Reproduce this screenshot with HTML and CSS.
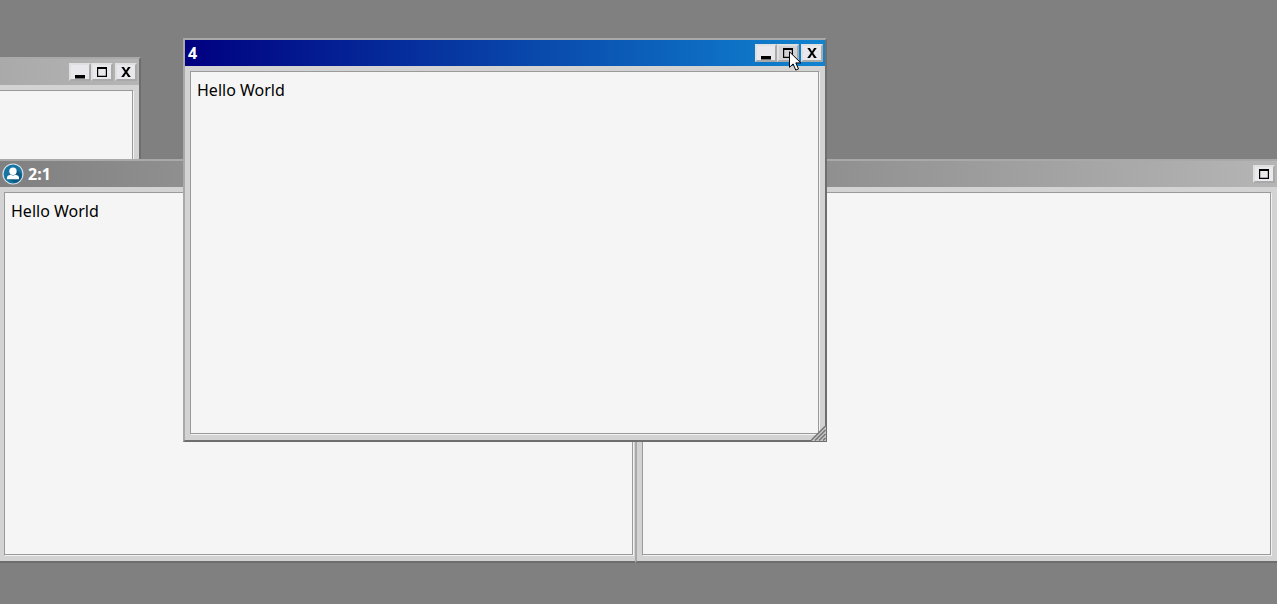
FILE: index.html
```html
<!DOCTYPE html>
<html lang="en">
<head>
<meta charset="utf-8">
<title>Desktop</title>
<link rel="stylesheet" href="styles.css">
</head>
<body>
<main class="desktop">
  <section class="window window-back">
    <header class="titlebar">
      <span class="title"></span>
      <button class="btn"><svg width="10" height="10"><path d="M0 8h10v3.5H0z" /></svg></button>
      <button class="btn"><svg width="10" height="10"><path fill-rule="evenodd" d="M0 0h10v10H0zM1.2 2v6.8h7.6V2z" /></svg></button>
      <button class="btn close"><svg width="10" height="10"><path d="M.3 0h2.6L5 3.6 7.1 0h2.6L6.2 5l3.6 5H7.1L5 6.4 2.9 10H.2l3.6-5z" /></svg></button>
    </header>
    <div class="content"></div>
  </section>

  <section class="window window-left">
    <header class="titlebar">
      <svg class="avatar" width="22" height="22" viewBox="0 0 22 22">
        <circle cx="11" cy="11" r="10" fill="#1774a3" stroke="#d6e1e8" stroke-width="1.2" />
        <path d="M14 6l6 6a9.3 9.3 0 0 1-7 8l-7-4z" fill="#0c5a84" />
        <circle cx="11" cy="8.2" r="3.7" fill="#fff" />
        <path d="M5 16.2v-1.4q0-2.4 3.6-3.1 2.4 1.5 4.8 0 3.6.7 3.6 3.1v1.4z" fill="#fff" />
      </svg>
      <span class="title">2:1</span>
    </header>
    <div class="content">Hello World</div>
  </section>

  <section class="window window-right">
    <header class="titlebar">
      <span class="title"></span>
      <button class="btn close"><svg width="10" height="10"><path fill-rule="evenodd" d="M0 0h10v10H0zM1.2 2v6.8h7.6V2z" /></svg></button>
    </header>
    <div class="content"></div>
  </section>

  <section class="window window-active">
    <header class="titlebar">
      <span class="title">4</span>
      <button class="btn"><svg width="10" height="10"><path d="M0 8h10v3.5H0z" /></svg></button>
      <button class="btn hover"><svg width="10" height="10"><path fill-rule="evenodd" d="M0 0h10v10H0zM1.2 2v6.8h7.6V2z" /></svg></button>
      <button class="btn close"><svg width="10" height="10"><path d="M.3 0h2.6L5 3.6 7.1 0h2.6L6.2 5l3.6 5H7.1L5 6.4 2.9 10H.2l3.6-5z" /></svg></button>
    </header>
    <div class="content">Hello World</div>
    <svg class="grip" width="15" height="15" viewBox="0 0 15 15">
      <path d="M0 15L15 0v15z" fill="#c4c4c4" />
      <path d="M0 14.5L14.5 0M4 14.5L14.5 4M8 14.5L14.5 8M12 14.5l2.5-2.5" stroke="#777" stroke-width="1.5" />
    </svg>
  </section>

  <svg class="cursor" width="13" height="20" viewBox="0 0 13 20">
    <path d="M.5.8v15.5l3.6-3.4 2.7 6.2 2.7-1.2-2.7-6h5z" fill="#fff" stroke="#000" />
  </svg>
</main>
</body>
</html>
```
FILE: styles.css
```css
body {
  margin: 0;
  font: 16px/22px "Noto Sans", sans-serif;
  color: #000;
}

.desktop {
  position: relative;
  width: 1277px;
  height: 604px;
  overflow: hidden;
  background: #808080;
}

/* Windows are freely placed on the desktop */
.window {
  position: absolute;
  box-sizing: border-box;
  display: flex;
  flex-direction: column;
  width: 644px;
  height: 404px;
  border: 2px solid;
  border-color: #a9a9a9 #6e6e6e #6e6e6e #a9a9a9;
  background: #d3d3d3;
}

.window-back { left: -503px; top: 57px; }
.window-left { left: -3px; top: 159px; }
.window-right { left: 635px; top: 159px; }
.window-active { left: 183px; top: 38px; }

.titlebar {
  flex: none;
  display: flex;
  align-items: center;
  box-sizing: border-box;
  height: 26px;
  padding: 0 2px 0 3px;
  background: linear-gradient(90deg, #808080, #b5b5b5);
  color: #fff;
  font-weight: 700;
}

.window-active .titlebar {
  background: linear-gradient(90deg, #000080, #1084d0);
}

.title { flex: 1; }
.avatar { margin-right: 4px; }

.btn {
  box-sizing: border-box;
  width: 22px;
  height: 18px;
  margin: 0;
  padding: 2px 4px;
  border: 2px solid;
  border-color: #e0e0e0 #a9a9a9 #a9a9a9 #e0e0e0;
  background: #e9e9ed;
}

.btn svg { display: block; overflow: visible; }
.hover { background: #d0d0d7; }
.close { margin-left: 2px; }

.content {
  flex: 1;
  margin: 5px 6px 6px 5px;
  padding: 7px 6px;
  border: 1px solid #9a9a9a;
  box-shadow: 1px 1px #f2f2f2;
  background: #f5f5f5;
}

.grip {
  position: absolute;
  right: -1px;
  bottom: -1px;
}

.cursor {
  position: absolute;
  left: 789px;
  top: 51px;
}
```
